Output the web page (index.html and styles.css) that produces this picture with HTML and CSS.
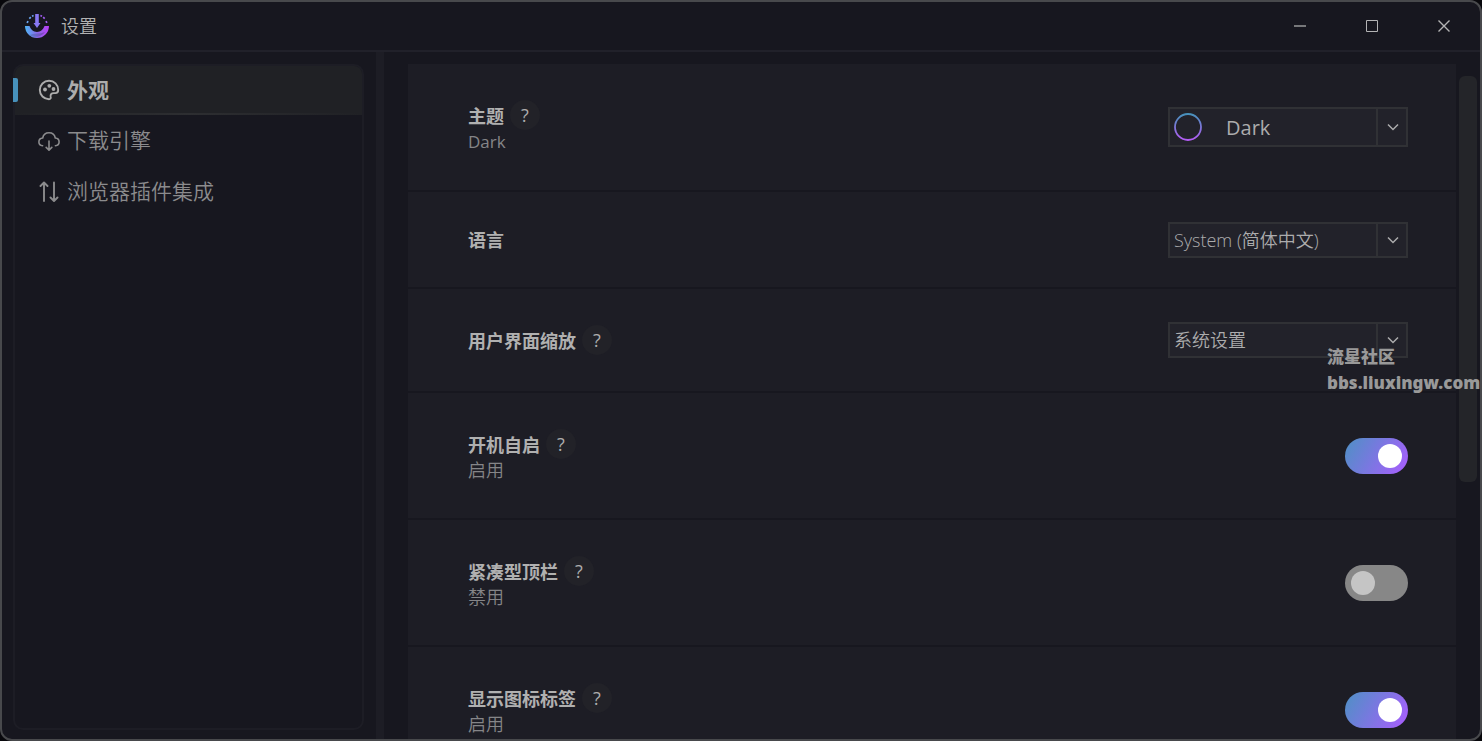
FILE: index.html
```html
<!DOCTYPE html>
<html lang="zh-CN">
<head>
<meta charset="utf-8">
<title>设置</title>
<link rel="stylesheet" href="styles.css">
</head>
<body>
<div class="window">
  <header class="titlebar">
    <svg class="logo" viewBox="0 0 24 24" aria-hidden="true">
      <defs>
        <linearGradient id="bowl" x1="0" y1="0" x2="1" y2="0"><stop offset="0" stop-color="#4db6f5"/><stop offset=".5" stop-color="#8a6be8"/><stop offset="1" stop-color="#b83df5"/></linearGradient>
        <linearGradient id="shade" x1="0" y1="0" x2="1" y2="0"><stop offset="0" stop-color="#5580d0"/><stop offset="1" stop-color="#8240b8"/></linearGradient>
      </defs>
      <path d="M0 12h4.500c1 3 4 6 7.500 6s6.500-3 7.500-6H24a12 12 0 0 1-24 0z" fill="url(#bowl)"/>
      <path d="M4 21q4-1.500 8-1.500t8-1.500A12 12 0 0 1 4 21z" fill="url(#shade)"/>
      <path d="M10.200 0h3.600v9h1.700L12 14 8.500 9h1.700z" fill="#8878f2"/>
      <g fill="none" stroke-width="1.700"><path d="M2.200 9l.7-2M4.300 4.600l1.500-1.400M7 2.200l1.600-.7" stroke="#6aa4f0"/><path d="M21.800 9l-.7-2M19.700 4.600l-1.500-1.400M17 2.200l-1.600-.7" stroke="#a05cf0"/></g>
    </svg>
    <h1 class="title">设置</h1>
    <div class="window-buttons">
      <button class="window-button" aria-label="最小化"><svg viewBox="0 0 12 12"><path d="M0 6h12" stroke="#77787a" stroke-width="2"/></svg></button>
      <button class="window-button" aria-label="最大化"><svg viewBox="0 0 12 12"><path d="M.5.5h11v11H.5z"/></svg></button>
      <button class="window-button" aria-label="关闭"><svg viewBox="0 0 12 12"><path d="M.5.5l11 11m0-11l-11 11" stroke-width="1.400"/></svg></button>
    </div>
  </header>
  <div class="body">
    <aside class="sidebar">
      <nav class="nav">
        <button class="nav-item active" aria-current="page">
          <svg viewBox="0 0 22 22"><path d="M11 1.800a9.200 9.200 0 0 0 0 18.400c1.500 0 2-1 1.700-2.200-.5-2.400.6-3.900 3-3.900h1.700c1.900 0 2.800-1.200 2.800-3.100 0-5.300-4-9.200-9.200-9.200z" stroke-width="1.900"/><g fill="currentColor" stroke="none"><circle cx="7" cy="10.500" r="1.900"/><circle cx="11.300" cy="6.800" r="1.900"/><circle cx="15.500" cy="10" r="1.900"/></g></svg>
          外观
        </button>
        <button class="nav-item">
          <svg viewBox="0 0 22 22"><path d="M4.600 16.700C2.300 16.400.9 14.900.9 12.900c0-2 1.500-3.700 3.800-3.900C5.300 5.900 7.800 3.800 11 3.800s5.700 2.100 6.300 5.200c2.300.2 3.800 1.900 3.800 3.900 0 2-1.400 3.500-3.700 3.800M11 12v9M8.200 18.400l2.800 2.800 2.800-2.800" stroke-width="1.600"/></svg>
          下载引擎
        </button>
        <button class="nav-item">
          <svg viewBox="0 0 22 22"><path d="M6 21V3M2.500 6L6 2.500 9.500 6M16 2.500v18M12.500 17.500L16 21l3.500-3.500" stroke-width="1.900"/></svg>
          浏览器插件集成
        </button>
      </nav>
    </aside>
    <div class="splitter"></div>
    <main class="content">
      <div class="rows">
        <section class="row">
          <div class="info"><div class="heading"><label for="theme">主题</label><button class="help" aria-label="帮助">?</button></div><p class="state latin">Dark</p></div>
          <div class="picker large">
            <svg class="swatch" viewBox="0 0 28 28" aria-hidden="true"><defs><linearGradient id="ring" x1="0" y1="0" x2="0" y2="1"><stop offset="0" stop-color="#4791bb"/><stop offset="1" stop-color="#b45cf5"/></linearGradient></defs><circle cx="14" cy="14" r="13" fill="none" stroke="url(#ring)" stroke-width="1.800"/></svg>
            <select id="theme"><option>Dark</option></select>
            <span class="arrow"><svg viewBox="0 0 12 8"><path d="M1 1.500l5 5 5-5"/></svg></span>
          </div>
        </section>
        <section class="row">
          <div class="info"><label class="plain" for="language">语言</label></div>
          <div class="picker">
            <select id="language"><option>System (简体中文)</option></select>
            <span class="arrow"><svg viewBox="0 0 12 8"><path d="M1 1.500l5 5 5-5"/></svg></span>
          </div>
        </section>
        <section class="row">
          <div class="info"><div class="heading"><label for="scale">用户界面缩放</label><button class="help" aria-label="帮助">?</button></div></div>
          <div class="picker">
            <select id="scale"><option>系统设置</option></select>
            <span class="arrow"><svg viewBox="0 0 12 8"><path d="M1 1.500l5 5 5-5"/></svg></span>
          </div>
        </section>
        <section class="row">
          <div class="info"><div class="heading"><label for="autostart">开机自启</label><button class="help" aria-label="帮助">?</button></div><p class="state">启用</p></div>
          <input class="toggle" type="checkbox" id="autostart" checked>
        </section>
        <section class="row">
          <div class="info"><div class="heading"><label for="compact">紧凑型顶栏</label><button class="help" aria-label="帮助">?</button></div><p class="state">禁用</p></div>
          <input class="toggle" type="checkbox" id="compact">
        </section>
        <section class="row">
          <div class="info"><div class="heading"><label for="labels">显示图标标签</label><button class="help" aria-label="帮助">?</button></div><p class="state">启用</p></div>
          <input class="toggle" type="checkbox" id="labels" checked>
        </section>
      </div>
      <div class="scroll-track"><div class="scroll-thumb"></div></div>
    </main>
  </div>
</div>
<div class="watermark">流星社区<br>bbs.liuxingw.com</div>
</body>
</html>
```
FILE: styles.css
```css
* { box-sizing: border-box; }

body {
  margin: 0;
  height: 100vh;
  overflow: hidden;
  position: relative;
  background: #08080c;
  color: #acacad;
  font: 350 18px/24px "Open Sans", "Noto Sans CJK SC", sans-serif;
}

button, select, input { font: inherit; color: inherit; margin: 0; padding: 0; border: 0; background: none; }
svg { display: block; flex: none; fill: none; stroke: currentColor; }

.window {
  height: 100%;
  display: flex;
  flex-direction: column;
  overflow: hidden;
  border: 2px solid #48494c;
  border-radius: 12px;
  background: #17171f;
}

.titlebar {
  display: flex;
  align-items: center;
  height: 50px;
  flex: none;
  padding-left: 23px;
  border-bottom: 2px solid #21212a;
}
.logo { width: 24px; height: 24px; stroke: none; }
.title { margin: 0 auto 0 12px; font-size: 18px; font-weight: 350; color: #b2b2b3; }
.window-buttons { display: flex; align-self: stretch; }
.window-button { width: 72px; display: grid; place-items: center; color: #b4b4b5; }
.window-button svg { width: 12px; height: 12px; }

.body { flex: 1; min-height: 0; display: flex; }

.sidebar { width: 374px; flex: none; padding: 12px 12px 9px 11px; }
.nav {
  height: 100%;
  border: 2px solid #1d1d25;
  border-radius: 10px;
  background: #17171f;
}
.nav-item {
  position: relative;
  display: flex;
  align-items: center;
  gap: 7px;
  width: 100%;
  height: 51px;
  padding: 0 23px 2px;
  font-size: 21px;
  color: #8b8b8d;
}
.nav-item svg { width: 22px; height: 22px; stroke-linecap: round; stroke-linejoin: round; }
.nav-item.active {
  height: 49px;
  font-weight: 700;
  color: #acacac;
  border-radius: 8px 8px 0 0;
  background: linear-gradient(90deg, #202125, #2d2e31 50%, #202125) bottom / 100% 2px no-repeat #202125;
}
.nav-item.active::before {
  content: "";
  position: absolute;
  left: -2px;
  top: 12px;
  width: 5px;
  height: 24px;
  border-radius: 0 2px 2px 0;
  background: #4791bb;
}

.splitter { width: 8px; flex: none; background: #1d1d25; }

.content { flex: 1; min-width: 0; display: flex; gap: 3px; padding: 12px 3px 0 24px; }
.rows { flex: 1; min-width: 0; overflow: hidden; display: flex; flex-direction: column; gap: 2px; }
.row {
  flex: none;
  display: flex;
  align-items: center;
  justify-content: space-between;
  padding: 0 48px 0 60px;
  background: #1d1d25;
}
.info { padding: 36px 0; }
.heading { display: flex; align-items: center; gap: 6px; height: 30px; }
.heading label, .plain { font-weight: 700; color: #b0b0b0; }
.heading label { padding-top: 2px; }
.plain { display: block; padding-top: 2px; line-height: 21px; }
.help {
  width: 30px;
  height: 30px;
  border-radius: 50%;
  background: #222228;
  font-weight: 400;
}
.state { margin: 0; line-height: 23px; color: #858588; }
.state.latin { font-size: 17px; line-height: 24px; font-weight: 400; }

.picker {
  display: flex;
  align-items: center;
  width: 240px;
  height: 36px;
  border: 2px solid #303135;
  background: #22222a;
}
.picker.large { height: 40px; font-size: 20px; padding-left: 4px; gap: 24px; }
.picker select { appearance: none; flex: 1; min-width: 0; align-self: stretch; padding-left: 4px; outline: 0; }
.picker.large select { padding: 2px 0 0; font-weight: 400; }
.swatch { width: 28px; height: 28px; stroke: none; }
.arrow {
  align-self: stretch;
  width: 30px;
  padding-left: 2px;
  display: grid;
  place-items: center;
  border-left: 2px solid #303135;
}
.arrow svg { width: 12px; height: 8px; stroke-width: 1.5; }

.toggle {
  appearance: none;
  width: 63px;
  height: 36px;
  padding: 6px;
  border-radius: 18px;
  display: flex;
  background: #878787;
}
.toggle::before { content: ""; width: 24px; height: 24px; border-radius: 50%; background: #c5c5c5; }
.toggle:checked { justify-content: flex-end; background: linear-gradient(120deg, #4d91c4, #ab5cff); }
.toggle:checked::before { background: #fff; }

.scroll-track { width: 18px; flex: none; padding-top: 12px; }
.scroll-thumb { height: 61%; min-height: 406px; border-radius: 6px; background: #242529; }

.watermark {
  position: absolute;
  right: 0;
  top: 344px;
  width: 155px;
  white-space: nowrap;
  font: 900 17px/26px "Noto Sans", "Noto Sans CJK SC", sans-serif;
  color: #999;
}
```
